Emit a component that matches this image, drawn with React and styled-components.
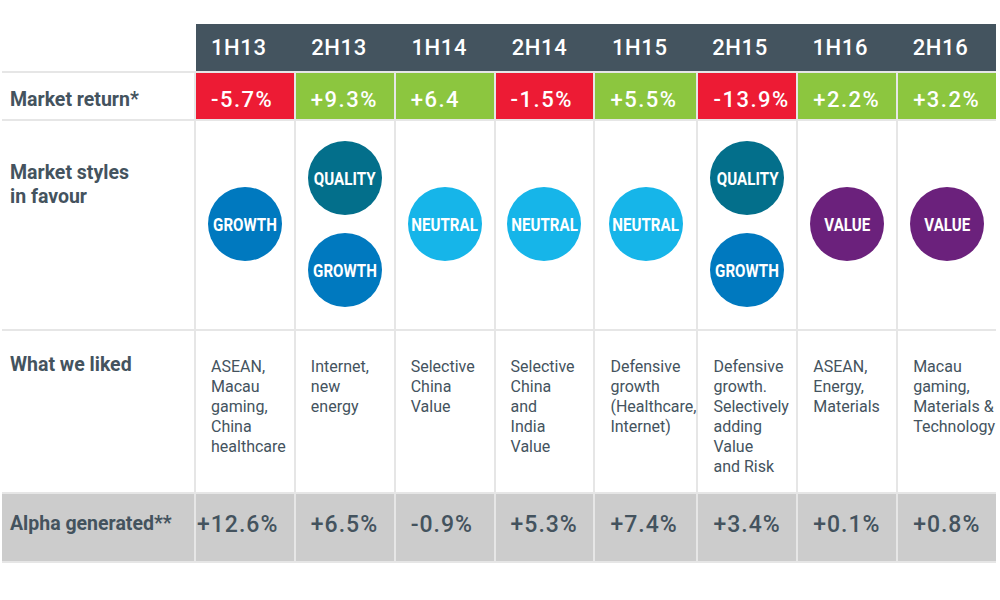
import React from "react";

import styled, { createGlobalStyle } from "styled-components";

const GlobalStyle = createGlobalStyle`
    body {
        margin: 0;
        background: #ffffff;
        font-family: Roboto, "Liberation Sans", sans-serif;
    }
`;

const DARK = "#44535e";

const bubbleColors = {
    GROWTH: "#0079bf",
    QUALITY: "#036f8b",
    NEUTRAL: "#16b5e9",
    VALUE: "#6b217c"
};

const Page = styled.div`
    width: 994px;
    padding: 24px 0 0 2px;
`;

const HeaderRow = styled.div`
    display: grid;
    grid-template-columns: 194px 1fr;
    height: 47px;
`;

const HeaderBand = styled.div`
    display: grid;
    grid-template-columns: repeat(8, 1fr);
    column-gap: 2px;
    background: #44545f;
`;

const PeriodCell = styled.div`
    display: flex;
    align-items: center;
    padding-left: 15px;
    color: #ffffff;
    font-size: 22px;
    font-weight: 500;
    letter-spacing: 0.6px;
`;

const Table = styled.div`
    display: grid;
    grid-template-columns: 192px repeat(8, 1fr);
    grid-template-rows: 46px 208px 161px 67px;
    gap: 2px;
    padding: 2px 0;
    background: #e6e6e6;
`;

const Label = styled.div`
    display: flex;
    align-items: ${props => (props.$top ? "flex-start" : "center")};
    padding: ${props => (props.$top ? `${props.$top}px 0 0 8px` : "0 0 0 8px")};
    padding-top: ${props => props.$shift && `${props.$shift}px`};
    padding-bottom: ${props => props.$lift && `${props.$lift}px`};
    background: ${props => (props.$grey ? "#cccccc" : "#ffffff")};
    color: ${DARK};
    font-size: 19.5px;
    font-weight: 700;
    line-height: 24px;
`;

const ReturnCell = styled.div`
    display: flex;
    align-items: center;
    padding: 7px 0 0 15px;
    background: ${props => (props.$up ? "#8cc63f" : "#ed1b34")};
    color: #ffffff;
    font-size: 22px;
    font-weight: 500;
    letter-spacing: 1.5px;
    white-space: nowrap;
`;

const StyleCell = styled.div`
    display: flex;
    flex-direction: column;
    align-items: center;
    justify-content: center;
    gap: 18px;
    padding-bottom: 2px;
    background: #ffffff;
`;

const Bubble = styled.div`
    width: 74px;
    height: 74px;
    border-radius: 50%;
    display: flex;
    align-items: center;
    justify-content: center;
    background: ${props => bubbleColors[props.$kind]};
    color: #ffffff;
`;

const BubbleText = styled.span`
    font-size: 18px;
    font-weight: 700;
    white-space: nowrap;
    transform: scaleX(0.84);
`;

const LikedCell = styled.div`
    padding: 26px 0 0 15px;
    background: #ffffff;
    color: ${DARK};
    font-size: 16px;
    line-height: 20px;
`;

const Line = styled.span`
    display: block;
    white-space: nowrap;
`;

const AlphaCell = styled.div`
    display: flex;
    align-items: center;
    padding: 0 0 7px ${props => props.$pad}px;
    background: #cccccc;
    color: ${DARK};
    font-size: 23px;
    font-weight: 500;
    letter-spacing: 1px;
    white-space: nowrap;
`;

const periods = [
    {
        period: "1H13",
        market: "-5.7%",
        up: false,
        styles: ["GROWTH"],
        liked: ["ASEAN,", "Macau", "gaming,", "China", "healthcare"],
        alpha: "+12.6%",
        pad: 1
    },
    {
        period: "2H13",
        market: "+9.3%",
        up: true,
        styles: ["QUALITY", "GROWTH"],
        liked: ["Internet,", "new", "energy"],
        alpha: "+6.5%"
    },
    {
        period: "1H14",
        market: "+6.4",
        up: true,
        styles: ["NEUTRAL"],
        liked: ["Selective", "China", "Value"],
        alpha: "-0.9%"
    },
    {
        period: "2H14",
        market: "-1.5%",
        up: false,
        styles: ["NEUTRAL"],
        liked: ["Selective", "China", "and", "India", "Value"],
        alpha: "+5.3%"
    },
    {
        period: "1H15",
        market: "+5.5%",
        up: true,
        styles: ["NEUTRAL"],
        liked: ["Defensive", "growth", "(Healthcare,", "Internet)"],
        alpha: "+7.4%"
    },
    {
        period: "2H15",
        market: "-13.9%",
        up: false,
        styles: ["QUALITY", "GROWTH"],
        liked: [
            "Defensive",
            "growth.",
            "Selectively",
            "adding",
            "Value",
            "and Risk"
        ],
        alpha: "+3.4%"
    },
    {
        period: "1H16",
        market: "+2.2%",
        up: true,
        styles: ["VALUE"],
        liked: ["ASEAN,", "Energy,", "Materials"],
        alpha: "+0.1%"
    },
    {
        period: "2H16",
        market: "+3.2%",
        up: true,
        styles: ["VALUE"],
        liked: ["Macau", "gaming,", "Materials &", "Technology"],
        alpha: "+0.8%"
    }
];

const App = () => {
    return (
        <Page>
            <GlobalStyle />

            <HeaderRow>
                <div />
                <HeaderBand>
                    {periods.map(p => (
                        <PeriodCell key={p.period}>{p.period}</PeriodCell>
                    ))}
                </HeaderBand>
            </HeaderRow>

            <Table>
                <Label $shift={7}>{"Market return*"}</Label>
                {periods.map(p => (
                    <ReturnCell key={p.period} $up={p.up}>
                        {p.market}
                    </ReturnCell>
                ))}

                <Label $top={40}>
                    {"Market styles"}
                    <br />
                    {"in favour"}
                </Label>
                {periods.map(p => (
                    <StyleCell key={p.period}>
                        {p.styles.map(kind => (
                            <Bubble key={kind} $kind={kind}>
                                <BubbleText>{kind}</BubbleText>
                            </Bubble>
                        ))}
                    </StyleCell>
                ))}

                <Label $top={22}>{"What we liked"}</Label>
                {periods.map(p => (
                    <LikedCell key={p.period}>
                        {p.liked.map((line, i) => (
                            <Line key={i}>{line}</Line>
                        ))}
                    </LikedCell>
                ))}

                <Label $grey $lift={7}>
                    {"Alpha generated**"}
                </Label>
                {periods.map(p => (
                    <AlphaCell key={p.period} $pad={p.pad || 15}>
                        {p.alpha}
                    </AlphaCell>
                ))}
            </Table>
        </Page>
    );
};

export default App;
